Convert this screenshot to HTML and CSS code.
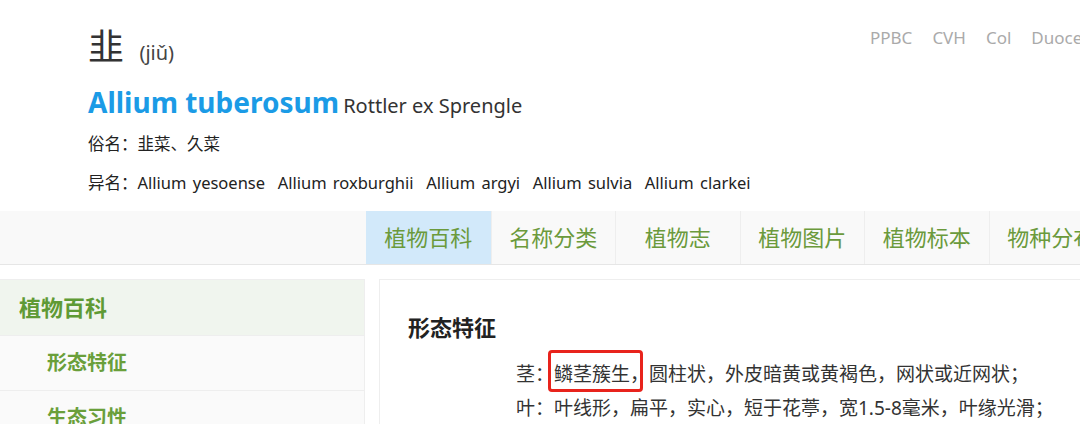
FILE: index.html
```html
<!DOCTYPE html>
<html lang="zh-CN">
<head>
    <meta charset="UTF-8">
    <meta name="viewport" content="width=device-width, initial-scale=1.0">
    <title>韭 Allium tuberosum</title>
    <link rel="stylesheet" href="styles.css">
</head>
<body>
    <div class="page">
        <!-- Header -->
        <div class="header">
            <div class="header-left">
                <div class="title">韭 <span class="pinyin">(jiǔ)</span></div>
                <div class="latin"><span class="latin-name">Allium tuberosum</span> <span class="author">Rottler ex Sprengle</span></div>
                <div class="names">俗名：韭菜、久菜</div>
                <div class="names synonyms">异名：Allium yesoense&nbsp; Allium roxburghii&nbsp; Allium argyi&nbsp; Allium sulvia&nbsp; Allium clarkei</div>
            </div>
            <div class="links">
                <a href="#">PPBC</a>
                <a href="#">CVH</a>
                <a href="#">Col</a>
                <a href="#">Duocet</a>
            </div>
        </div>

        <!-- Tabs -->
        <div class="tabs">
            <a class="tab active" href="#">植物百科</a>
            <a class="tab" href="#">名称分类</a>
            <a class="tab" href="#">植物志</a>
            <a class="tab" href="#">植物图片</a>
            <a class="tab" href="#">植物标本</a>
            <a class="tab" href="#">物种分布</a>
        </div>

        <!-- Body -->
        <div class="content">
            <div class="sidebar">
                <div class="side-head">植物百科</div>
                <div class="side-item">形态特征</div>
                <div class="side-item">生态习性</div>
            </div>
            <div class="main">
                <h2>形态特征</h2>
                <p>茎：<span class="mark">鳞茎簇生</span>，圆柱状，外皮暗黄或黄褐色，网状或近网状；</p>
                <p>叶：叶线形，扁平，实心，短于花葶，宽1.5-8毫米，叶缘光滑；</p>
            </div>
        </div>
    </div>
</body>
</html>
```

FILE: styles.css
```css
body {
    margin: 0;
    font-family: "Noto Sans", "Noto Sans CJK SC", sans-serif;
    color: #333;
    background: #fff;
    overflow: hidden;
}
.page {
    width: 1200px;
}
.header {
    display: flex;
    padding: 22px 0 0 88px;
    height: 189px;
    box-sizing: border-box;
}
.header-left {
    width: 782px;
}
.title {
    font-size: 36px;
    line-height: 50px;
    color: #333;
}
.pinyin {
    font-size: 20px;
    color: #444;
    margin-left: 6px;
}
.latin {
    margin-top: 6px;
    line-height: 36px;
}
.latin-name {
    font-size: 28px;
    font-weight: bold;
    color: #1b9be6;
}
.author {
    font-size: 20px;
    color: #333;
}
.names {
    font-size: 16.5px;
    line-height: 22px;
    margin-top: 8px;
    color: #222;
}
.names + .names {
    margin-top: 17px;
}
.synonyms {
    word-spacing: 2px;
}
.links {
    display: flex;
    gap: 20px;
    padding-top: 4px;
}
.links a {
    font-size: 17px;
    color: #aaa;
    text-decoration: none;
    line-height: 24px;
}
.tabs {
    display: flex;
    margin-top: 22px;
    padding-left: 366px;
    height: 53px;
    background: #f9f9f9;
    border-bottom: 1px solid #e6e6e6;
}
.tab {
    width: 124.5px;
    flex-shrink: 0;
    box-sizing: border-box;
    text-align: center;
    line-height: 53px;
    font-size: 22px;
    color: #6b9a3c;
    text-decoration: none;
    border-left: 1px solid #eee;
}
.tab:first-child {
    border-left: none;
}
.tab.active {
    background: #d2e9fa;
}
.content {
    display: flex;
    gap: 14px;
    margin-top: 14px;
}
.sidebar {
    width: 364px;
    border: 1px solid #eee;
    border-left: none;
    flex-shrink: 0;
}
.side-head {
    height: 55px;
    line-height: 55px;
    padding-left: 19px;
    font-size: 22px;
    font-weight: bold;
    color: #5f9a35;
    background: #f0f5ee;
}
.side-item {
    height: 54px;
    line-height: 54px;
    padding-left: 47px;
    font-size: 20px;
    font-weight: bold;
    color: #6a9f3a;
    background: #fafafa;
    border-top: 1px solid #eee;
}
.main {
    flex: 1;
    border: 1px solid #eee;
    padding: 30px 28px;
}
.main h2 {
    margin: 0 0 13px;
    font-size: 22px;
    font-weight: bold;
    line-height: 34px;
    color: #222;
}
.main p {
    margin: 0;
    padding-left: 108px;
    font-size: 19px;
    line-height: 34px;
    color: #333;
    white-space: nowrap;
}
.mark {
    position: relative;
}
/* red highlight box drawn over the phrase */
.mark::after {
    content: "";
    position: absolute;
    left: -6px;
    right: -13px;
    top: -11px;
    bottom: -5px;
    border: 3px solid #e8231c;
    border-radius: 4px;
}
```
